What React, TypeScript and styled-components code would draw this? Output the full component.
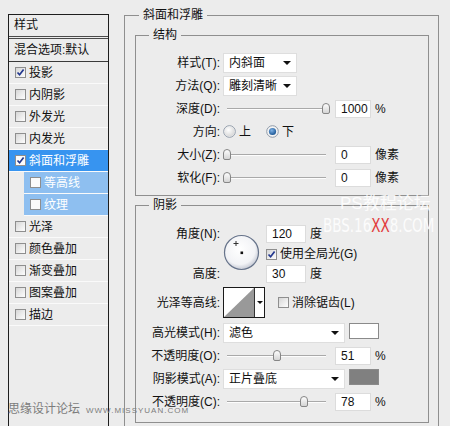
import React from "react";
import styled, { createGlobalStyle } from "styled-components";

// -------------------- GLOBAL -------------------- //

const GlobalStyle = createGlobalStyle`
  html, body {
    margin: 0;
    padding: 0;
    background: #ececec;
    overflow: hidden;
  }
  body {
    font-family: "Liberation Sans", "Noto Sans CJK SC", sans-serif;
    font-size: 12px;
    color: #111;
  }
`;

const Page = styled.div`
  position: relative;
  width: 450px;
  height: 426px;
  box-sizing: border-box;
  padding: 8px 0 0 8px;
  display: flex;
  align-items: flex-start;
  overflow: hidden;
  background: #ececec;
`;

// -------------------- LEFT STYLE LIST -------------------- //

const StylePanel = styled.div`
  width: 101px;
  height: 440px;
  margin-top: 6px;
  flex-shrink: 0;
  box-sizing: border-box;
  border: 1px solid #1e1e1e;
  border-bottom: none;
`;

const PanelHeader = styled.div`
  height: 24px;
  box-sizing: border-box;
  border-bottom: 3px double #4a4a4a;
  padding-left: 5px;
  line-height: 21px;
`;

const BlendRow = styled.div`
  height: 23px;
  box-sizing: border-box;
  border-bottom: 1px solid #3a3a3a;
  padding-left: 5px;
  line-height: 22px;
`;

const ListRow = styled.div<{ $selected?: boolean; $sub?: boolean }>`
  display: flex;
  align-items: center;
  gap: 3px;
  height: 22px;
  box-sizing: border-box;
  border-bottom: 1px solid #fafafa;
  margin-left: ${({ $sub }) => ($sub ? 15 : 0)}px;
  padding-left: 6px;
  background: ${({ $selected, $sub }) =>
    $sub ? "#8ebff0" : $selected ? "#3794f0" : "transparent"};
  color: ${({ $selected, $sub }) => ($selected || $sub ? "#fff" : "#111")};
  line-height: 14px;
`;

const Box = styled.span<{ $light?: boolean }>`
  width: 11px;
  height: 11px;
  flex-shrink: 0;
  box-sizing: border-box;
  border: 1px solid #8e8e8e;
  background: ${({ $light }) =>
    $light
      ? "#fbfbfb"
      : "linear-gradient(135deg, #d6d6d6 0%, #eeeeee 60%, #fdfdfd 100%)"};
  display: inline-flex;
  align-items: center;
  justify-content: center;
`;

const CheckBox: React.FC<{ checked?: boolean; light?: boolean }> = ({
  checked,
  light,
}) => (
  <Box $light={light}>
    {checked && (
      <svg width="9" height="9" viewBox="0 0 9 9">
        <path
          d="M1.5 4.5 L3.6 6.8 L7.6 1.6"
          fill="none"
          stroke="#22378e"
          strokeWidth="1.7"
        />
      </svg>
    )}
  </Box>
);

// -------------------- GROUP BOXES -------------------- //

const OuterGroup = styled.fieldset`
  width: 315px;
  height: 440px;
  margin: 0 0 0 15px;
  box-sizing: border-box;
  flex-shrink: 0;
  border: 1px solid #8f8f8f;
  border-bottom: none;
  padding: 6px 9px 0 10px;
  min-width: 0;
`;

const Group = styled.fieldset<{ $pt: number; $pb: number; $mt?: number }>`
  width: 294px;
  box-sizing: border-box;
  margin: ${({ $mt }) => $mt ?? 0}px 0 0 0;
  border: 1px solid #8f8f8f;
  padding: ${({ $pt }) => $pt}px 0 ${({ $pb }) => $pb}px 0;
  min-width: 0;
`;

const Legend = styled.legend<{ $offset: number }>`
  margin-left: ${({ $offset }) => $offset}px;
  padding: 0 4px;
  line-height: 14px;
  font-size: 12px;
`;

const Rows = styled.div<{ $gap: number }>`
  display: flex;
  flex-direction: column;
  gap: ${({ $gap }) => $gap}px;
`;

const Row = styled.div<{ $h: number }>`
  display: flex;
  align-items: center;
  height: ${({ $h }) => $h}px;
`;

const Label = styled.span`
  width: 84px;
  margin-right: 3px;
  flex-shrink: 0;
  text-align: right;
  white-space: nowrap;
  line-height: 14px;
`;

// -------------------- CONTROLS -------------------- //

const SelectBox = styled.div<{ $w: number }>`
  width: ${({ $w }) => $w}px;
  height: 20px;
  box-sizing: border-box;
  background: #fff;
  border: 1px solid #dedede;
  display: flex;
  align-items: center;
  justify-content: space-between;
  padding: 0 5px 0 5px;
  line-height: 14px;
`;

const Arrow = styled.span`
  width: 0;
  height: 0;
  border-left: 4px solid transparent;
  border-right: 4px solid transparent;
  border-top: 4px solid #111;
`;

const Select: React.FC<{ width: number; value: string }> = ({
  width,
  value,
}) => (
  <SelectBox $w={width}>
    <span>{value}</span>
    <Arrow />
  </SelectBox>
);

const SliderTrack = styled.div`
  position: relative;
  width: 107px;
  height: 16px;
  flex-shrink: 0;

  &::before {
    content: "";
    position: absolute;
    left: 4px;
    right: 4px;
    top: 7px;
    height: 0;
    border-top: 1px solid #a9a9a9;
    border-bottom: 1px solid #fdfdfd;
  }
`;

const Thumb = styled.span<{ $pos: number }>`
  position: absolute;
  left: ${({ $pos }) => ($pos * 99) / 100}px;
  top: 2px;
  width: 8px;
  height: 11px;
  box-sizing: border-box;
  border: 1px solid #868686;
  border-radius: 4px 4px 2px 2px;
  background: linear-gradient(#fdfdfd, #d4d4d4);
`;

const Slider: React.FC<{ pos: number }> = ({ pos }) => (
  <SliderTrack>
    <Thumb $pos={pos} />
  </SliderTrack>
);

const NumField = styled.div<{ $w: number; $ml?: number }>`
  width: ${({ $w }) => $w}px;
  height: 18px;
  margin-left: ${({ $ml }) => $ml ?? 0}px;
  flex-shrink: 0;
  box-sizing: border-box;
  background: #fff;
  border: 1px solid #dcdcdc;
  padding-left: 5px;
  line-height: 16px;
`;

const Unit = styled.span`
  margin-left: 4px;
  line-height: 14px;
`;

const RadioOption = styled.span<{ $ml?: number }>`
  display: inline-flex;
  align-items: center;
  gap: 3px;
  margin-left: ${({ $ml }) => $ml ?? 0}px;
  line-height: 14px;
`;

const Radio: React.FC<{ on?: boolean }> = ({ on }) => (
  <svg width="13" height="13" viewBox="0 0 13 13">
    <defs>
      <radialGradient id={on ? "radOn" : "radOff"} cx="40%" cy="35%" r="70%">
        <stop offset="0%" stopColor={on ? "#7fb2e6" : "#ffffff"} />
        <stop offset="100%" stopColor={on ? "#14508f" : "#d6d6d6"} />
      </radialGradient>
    </defs>
    <circle cx="6.5" cy="6.5" r="5.8" fill="#f4f4f4" stroke="#8f9aa8" />
    {on ? (
      <circle cx="6.5" cy="6.5" r="3.6" fill="url(#radOn)" />
    ) : (
      <circle cx="6.5" cy="6.5" r="5" fill="url(#radOff)" />
    )}
  </svg>
);

const CheckOption = styled.span<{ $ml?: number }>`
  display: inline-flex;
  align-items: center;
  gap: 3px;
  margin-left: ${({ $ml }) => $ml ?? 0}px;
  line-height: 14px;
  white-space: nowrap;
`;

const Swatch = styled.span<{ $color: string }>`
  width: 30px;
  height: 16px;
  margin-left: 4px;
  align-self: flex-start;
  box-sizing: border-box;
  border: 1px solid #8a8a8a;
  background: ${({ $color }) => $color};
`;

// -------------------- ANGLE BLOCK -------------------- //

const AngleGrid = styled.div`
  display: grid;
  grid-template-columns: 84px 40px auto;
  grid-template-rows: 18px 18px 18px;
  column-gap: 3px;
  row-gap: 2px;
  align-items: center;
`;

const GridLabel = styled.span<{ $row: number }>`
  grid-column: 1;
  grid-row: ${({ $row }) => $row};
  text-align: right;
  line-height: 14px;
`;

const DialCell = styled.div`
  grid-column: 2;
  grid-row: 1 / 4;
  align-self: start;
  margin-top: 9px;
  width: 37px;
  height: 37px;
`;

const GridCell = styled.div<{ $row: number }>`
  grid-column: 3;
  grid-row: ${({ $row }) => $row};
  display: flex;
  align-items: center;
`;

const AngleDial: React.FC = () => (
  <DialCell>
    <svg width="37" height="37" viewBox="0 0 37 37">
      <defs>
        <radialGradient id="dialFill" cx="45%" cy="40%" r="60%">
          <stop offset="0%" stopColor="#ffffff" />
          <stop offset="75%" stopColor="#f2f3f6" />
          <stop offset="100%" stopColor="#c5c9d4" />
        </radialGradient>
      </defs>
      <circle
        cx="18.5"
        cy="18.5"
        r="17"
        fill="url(#dialFill)"
        stroke="#66738a"
        strokeWidth="1.2"
      />
      <rect x="17.5" y="17.5" width="2.6" height="2.6" fill="#111" />
      <path d="M10.5 9.5 H15.5 M13 7 V12" stroke="#333" strokeWidth="1" />
    </svg>
  </DialCell>
);

// -------------------- CONTOUR PICKER -------------------- //

const ContourBox = styled.div`
  width: 42px;
  height: 31px;
  box-sizing: border-box;
  border: 1px solid #1a1a1a;
  background: #fff;
  display: flex;
`;

const ContourPreview = styled.div`
  width: 30px;
  height: 100%;
  border-right: 1px solid #333;
`;

const ContourArrow = styled.div`
  flex: 1;
  display: flex;
  align-items: center;
  justify-content: center;
`;

const SmallArrow = styled.span`
  width: 0;
  height: 0;
  border-left: 3px solid transparent;
  border-right: 3px solid transparent;
  border-top: 3px solid #111;
`;

const ContourRow = styled.div`
  display: flex;
  align-items: center;
  height: 31px;
  margin-top: 4px;
`;

const ModeRows = styled(Rows)`
  margin-top: 5px;
`;

// -------------------- WATERMARKS -------------------- //

const ForumMark = styled.div`
  position: absolute;
  left: 340px;
  top: 194px;
  font-size: 17px;
  line-height: 20px;
  color: rgba(255, 255, 255, 0.85);
  white-space: nowrap;
  pointer-events: none;
`;

const BbsMark = styled.div`
  position: absolute;
  left: 323px;
  top: 214px;
  font-family: "DejaVu Sans Condensed", "Liberation Sans", sans-serif;
  font-size: 15px;
  line-height: 18px;
  transform: scaleY(1.25);
  transform-origin: top left;
  color: rgba(255, 255, 255, 0.85);
  white-space: nowrap;
  pointer-events: none;

  b {
    font-weight: normal;
    color: #e23a3a;
  }
`;

const SiteMark = styled.div`
  position: absolute;
  left: 8px;
  top: 401px;
  display: flex;
  align-items: baseline;
  gap: 6px;
  color: #7c7c7c;
  font-size: 12px;
  line-height: 16px;
  white-space: nowrap;
  pointer-events: none;

  span {
    font-size: 8px;
    letter-spacing: 1px;
  }
`;

// -------------------- DATA -------------------- //

const effects = [
  { name: "投影", checked: true },
  { name: "内阴影" },
  { name: "外发光" },
  { name: "内发光" },
  { name: "斜面和浮雕", checked: true, selected: true },
  { name: "等高线", sub: true },
  { name: "纹理", sub: true },
  { name: "光泽" },
  { name: "颜色叠加" },
  { name: "渐变叠加" },
  { name: "图案叠加" },
  { name: "描边" },
];

// -------------------- MAIN COMPONENT -------------------- //

const App: React.FC = () => {
  return (
    <Page>
      <GlobalStyle />

      {/* Layer style list */}
      <StylePanel>
        <PanelHeader>样式</PanelHeader>
        <BlendRow>混合选项:默认</BlendRow>
        {effects.map((fx) => (
          <ListRow key={fx.name} $selected={fx.selected} $sub={fx.sub}>
            <CheckBox checked={fx.checked} light={fx.selected || fx.sub} />
            {fx.name}
          </ListRow>
        ))}
      </StylePanel>

      {/* Bevel and emboss settings */}
      <OuterGroup>
        <Legend $offset={4}>斜面和浮雕</Legend>

        <Group $pt={10} $pb={7}>
          <Legend $offset={13}>结构</Legend>
          <Rows $gap={2}>
            <Row $h={21}>
              <Label>样式(T):</Label>
              <Select width={74} value="内斜面" />
            </Row>
            <Row $h={21}>
              <Label>方法(Q):</Label>
              <Select width={74} value="雕刻清晰" />
            </Row>
            <Row $h={21}>
              <Label>深度(D):</Label>
              <Slider pos={100} />
              <NumField $w={36} $ml={5}>
                1000
              </NumField>
              <Unit>%</Unit>
            </Row>
            <Row $h={21}>
              <Label>方向:</Label>
              <RadioOption>
                <Radio />上
              </RadioOption>
              <RadioOption $ml={15}>
                <Radio on />下
              </RadioOption>
            </Row>
            <Row $h={21}>
              <Label>大小(Z):</Label>
              <Slider pos={0} />
              <NumField $w={36} $ml={5}>
                0
              </NumField>
              <Unit>像素</Unit>
            </Row>
            <Row $h={21}>
              <Label>软化(F):</Label>
              <Slider pos={0} />
              <NumField $w={36} $ml={5}>
                0
              </NumField>
              <Unit>像素</Unit>
            </Row>
          </Rows>
        </Group>

        <Group $pt={13} $pb={10} $mt={2}>
          <Legend $offset={13}>阴影</Legend>

          <AngleGrid>
            <GridLabel $row={1}>角度(N):</GridLabel>
            <AngleDial />
            <GridCell $row={1}>
              <NumField $w={40}>120</NumField>
              <Unit>度</Unit>
            </GridCell>
            <GridCell $row={2}>
              <CheckOption>
                <CheckBox checked />
                使用全局光(G)
              </CheckOption>
            </GridCell>
            <GridLabel $row={3}>高度:</GridLabel>
            <GridCell $row={3}>
              <NumField $w={40}>30</NumField>
              <Unit>度</Unit>
            </GridCell>
          </AngleGrid>

          <ContourRow>
            <Label>光泽等高线:</Label>
            <ContourBox>
              <ContourPreview>
                <svg width="30" height="29" viewBox="0 0 30 29">
                  <polygon points="0,29 30,0 30,29" fill="#999999" />
                </svg>
              </ContourPreview>
              <ContourArrow>
                <SmallArrow />
              </ContourArrow>
            </ContourBox>
            <CheckOption $ml={13}>
              <CheckBox />
              消除锯齿(L)
            </CheckOption>
          </ContourRow>

          <ModeRows $gap={3}>
            <Row $h={20}>
              <Label>高光模式(H):</Label>
              <Select width={122} value="滤色" />
              <Swatch $color="#ffffff" />
            </Row>
            <Row $h={20}>
              <Label>不透明度(O):</Label>
              <Slider pos={51} />
              <NumField $w={36} $ml={5}>
                51
              </NumField>
              <Unit>%</Unit>
            </Row>
            <Row $h={20}>
              <Label>阴影模式(A):</Label>
              <Select width={122} value="正片叠底" />
              <Swatch $color="#808080" />
            </Row>
            <Row $h={20}>
              <Label>不透明度(C):</Label>
              <Slider pos={78} />
              <NumField $w={36} $ml={5}>
                78
              </NumField>
              <Unit>%</Unit>
            </Row>
          </ModeRows>
        </Group>
      </OuterGroup>

      {/* Watermarks lying over the dialog */}
      <ForumMark>PS教程论坛</ForumMark>
      <BbsMark>
        BBS.16<b>XX</b>8.COM
      </BbsMark>
      <SiteMark>
        思缘设计论坛<span>WWW.MISSYUAN.COM</span>
      </SiteMark>
    </Page>
  );
};

export default App;
